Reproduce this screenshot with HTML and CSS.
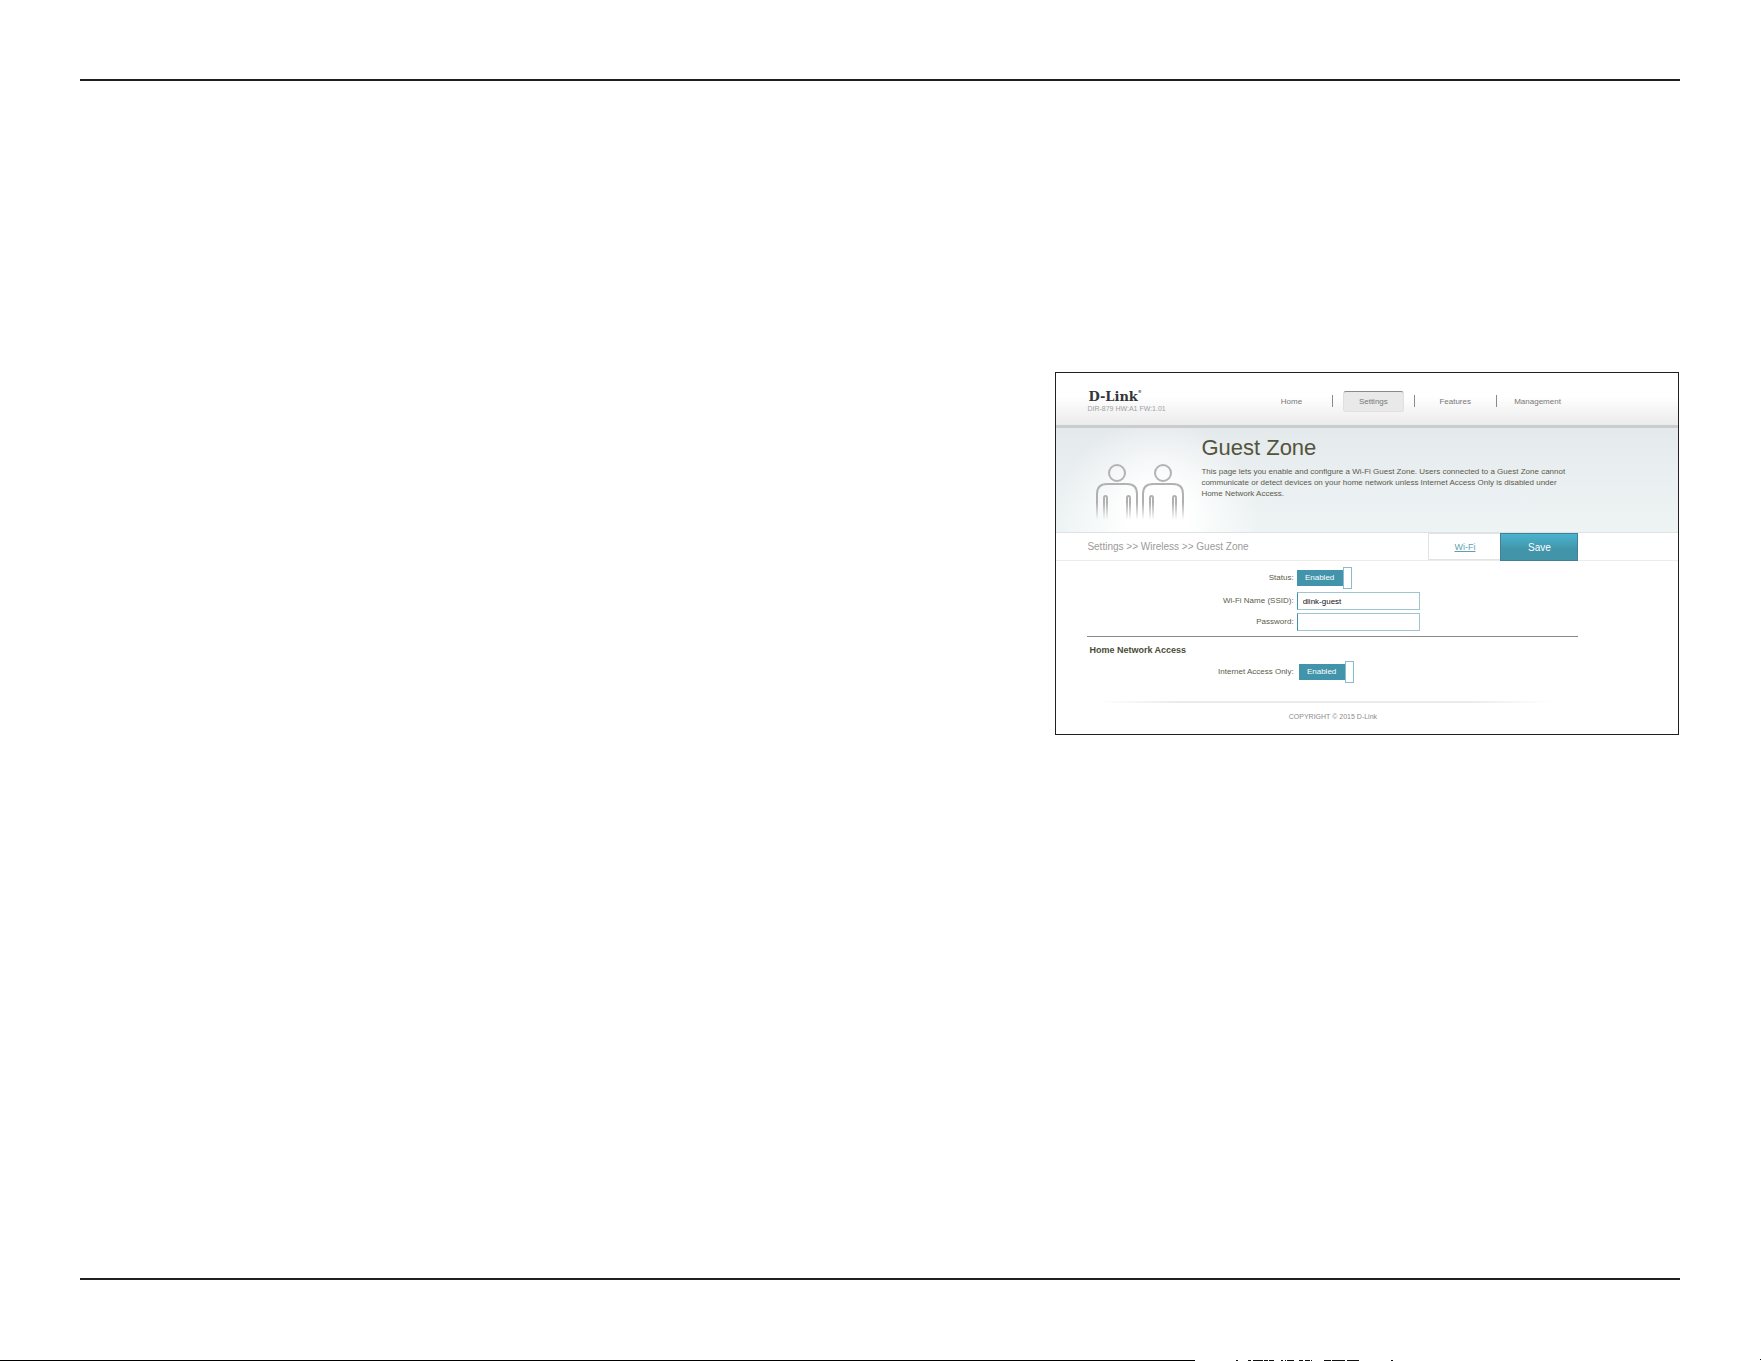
FILE: index.html
```html
<!DOCTYPE html>
<html lang="en">
<head>
    <meta charset="UTF-8">
    <meta name="viewport" content="width=device-width, initial-scale=1.0">
    <title>Guest Zone</title>
    <link rel="stylesheet" href="styles.css">
</head>
<body>

    <main class="sheet">
        <section class="panel">

            <header class="top">
                <div class="wrap top-row">
                    <div class="brand">
                        <div class="logo">D-Link<sup>®</sup></div>
                        <div class="model">DIR-879 HW:A1 FW:1.01</div>
                    </div>
                    <nav class="menu">
                        <a href="#">Home</a>
                        <a href="#" class="active"><span>Settings</span></a>
                        <a href="#">Features</a>
                        <a href="#">Management</a>
                    </nav>
                </div>
            </header>

            <div class="hero">
                <div class="wrap hero-row">
                    <svg class="people" viewBox="0 0 92 62" aria-hidden="true">
                        <defs>
                            <linearGradient id="fade" gradientUnits="userSpaceOnUse" x1="0" y1="0" x2="0" y2="58">
                                <stop offset="0" stop-color="#b4b4b4"/>
                                <stop offset="0.7" stop-color="#b0b0b0"/>
                                <stop offset="1" stop-color="#b0b0b0" stop-opacity="0"/>
                            </linearGradient>
                        </defs>
                        <g fill="none" stroke="url(#fade)" stroke-width="2">
                            <circle cx="22" cy="11" r="8"/>
                            <path d="M2 60V32Q2 22 12 22H32Q42 22 42 32V60"/>
                            <path d="M9 60V36Q9 34 10.500 34Q12 34 12 36V60M32 60V36Q32 34 33.500 34Q35 34 35 36V60"/>
                            <circle cx="68" cy="11" r="8"/>
                            <path d="M48 60V32Q48 22 58 22H78Q88 22 88 32V60"/>
                            <path d="M55 60V36Q55 34 56.500 34Q58 34 58 36V60M78 60V36Q78 34 79.500 34Q81 34 81 36V60"/>
                        </g>
                    </svg>
                    <div class="intro">
                        <h1>Guest Zone</h1>
                        <p>This page lets you enable and configure a Wi-Fi Guest Zone. Users connected to a Guest Zone cannot<br>
                        communicate or detect devices on your home network unless Internet Access Only is disabled under<br>
                        Home Network Access.</p>
                    </div>
                </div>
            </div>

            <div class="bar">
                <div class="wrap bar-row">
                    <div class="crumbs">Settings &gt;&gt; Wireless &gt;&gt; Guest Zone</div>
                    <a href="#" class="wifi">Wi-Fi</a>
                    <button type="button" class="save">Save</button>
                </div>
            </div>

            <form class="wrap">
                <div class="fields">
                    <label for="status">Status:</label>
                    <div class="toggle"><span>Enabled</span><input type="checkbox" id="status" checked></div>
                    <label for="ssid">Wi-Fi Name (SSID):</label>
                    <input type="text" id="ssid" class="text" value="dlink-guest">
                    <label for="password">Password:</label>
                    <input type="password" id="password" class="text">
                </div>
                <h2>Home Network Access</h2>
                <div class="fields access">
                    <label for="internet">Internet Access Only:</label>
                    <div class="toggle"><span>Enabled</span><input type="checkbox" id="internet" checked></div>
                </div>
            </form>

            <footer class="wrap copyright">COPYRIGHT © 2015 D-Link</footer>
        </section>
    </main>

    <!-- top edge of the next sheet -->
    <div class="next">
        <div class="next-line"></div>
        <svg width="566" height="2" viewBox="0 0 566 2" aria-hidden="true">
            <path d="M41 1.500h2M53 1.500h3M58 1.500h10M69 1.500h4M74 1.500h5M86 1.500h2M90 1.500h1M92 1.500h7M104 1.500h4M110 1.500h5M116 1.500h1M129 1.500h7M137 1.500h13M152 1.500h12M196 1.500h2M565 .5h1" stroke="#111"/>
        </svg>
    </div>

</body>
</html>
```
FILE: styles.css
```css
* {
    box-sizing: border-box;
}

body {
    font-family: "Liberation Sans", Arial, sans-serif;
    margin: 0;
    background-color: #fff;
    color: #5b5b4b;
    font-size: 8px;
    display: flex;
    flex-direction: column;
    min-height: 100vh;
}

a {
    color: inherit;
    text-decoration: none;
}

.sheet {
    flex: 1;
    display: grid;
    grid-template-columns: 39%;
    justify-content: end;
    align-items: start;
    margin: 79px 81px 79px 80px;
    padding: 291px 1px 0 0;
    border-top: 2px solid #231f20;
    border-bottom: 2px solid #231f20;
}

.panel {
    border: 1px solid #231f20;
}

.wrap {
    width: 79%;
    margin-left: 31px;
}

/* Header */

.top {
    background: linear-gradient(#fff 45%, #ebebeb);
    border-bottom: 3px solid #c9cecd;
}

.top-row {
    display: grid;
    grid-template-columns: 1fr 2fr;
    height: 52px;
    padding-top: 17px;
}

.logo {
    font-family: "DejaVu Serif", serif;
    font-weight: bold;
    font-size: 13px;
    line-height: 13px;
    color: #333537;
    padding-left: 1px;
}

.logo sup {
    font-size: 4px;
    line-height: 4px;
    vertical-align: top;
}

.model {
    font-size: 7px;
    line-height: 12px;
    color: #a0a0a0;
}

.menu {
    display: grid;
    grid-template-columns: repeat(4, 1fr);
    height: 20px;
}

.menu a {
    display: flex;
    align-items: center;
    justify-content: center;
    height: 12px;
    margin-top: 5px;
    border-right: 1px solid #8a8a8a;
    color: #777;
}

.menu a:last-child {
    border-right: none;
}

.menu .active span {
    padding: 4px 15px;
    line-height: 11px;
    background-color: #e9e9e9;
    border: 1px solid #e0e0e0;
    border-top-color: #8a8a8a;
    border-radius: 3px;
}

/* Title area */

.hero {
    background:
        radial-gradient(ellipse 100px 100px at 102px 90px, #fff 30%, rgba(255, 255, 255, 0)),
        linear-gradient(#e4e9ec, #eaeff1 50%, #eef4f4);
    border-bottom: 1px solid #dde2e2;
}

.hero-row {
    display: grid;
    grid-template-columns: 92px 1fr;
    gap: 14px;
    padding-left: 8px;
    height: 104px;
}

.people {
    width: 92px;
    height: 62px;
    margin-top: 34px;
}

.intro {
    white-space: nowrap;
}

h1 {
    margin: 8px 0 6px;
    font-size: 22px;
    line-height: 24px;
    font-weight: normal;
    color: #54543c;
}

p {
    margin: 0;
    line-height: 11px;
}

/* Breadcrumb bar */

.bar {
    border-bottom: 1px solid #ececec;
}

.bar-row {
    display: flex;
    height: 27px;
}

.crumbs {
    flex: 1;
    font-size: 10px;
    line-height: 27px;
    color: #9b9b9b;
}

.wifi {
    width: 72px;
    border: 1px solid #e2e4e4;
    border-right: none;
    font-size: 9px;
    line-height: 26px;
    text-align: center;
    text-decoration: underline;
    color: #5f9fb4;
}

.save {
    width: 78px;
    height: 28px;
    padding: 0;
    border: 1px solid #448095;
    background: linear-gradient(#4bb4cf, #4294a9 60%);
    color: #fff;
    font-family: inherit;
    font-size: 10px;
}

/* Form */

.fields {
    display: grid;
    grid-template-columns: 42% auto;
    justify-content: start;
    align-items: center;
    gap: 3px;
    padding: 6px 0 5px;
    border-bottom: 1px solid #8a8a8a;
}

.fields label {
    text-align: right;
    line-height: 10px;
}

.text {
    width: 123px;
    height: 18px;
    padding: 0 5px;
    border: 1px solid #9dc6d1;
    border-left-color: #4294a9;
    font-family: inherit;
    font-size: 8px;
    color: #111;
    outline: none;
}

.toggle {
    display: flex;
    align-items: center;
}

.toggle span {
    width: 46px;
    height: 16px;
    line-height: 16px;
    text-align: center;
    background-color: #4294ab;
    color: #fff;
}

.toggle input {
    appearance: none;
    width: 9px;
    height: 22px;
    margin: 0;
    border: 1px solid #8abccb;
    background-color: #fff;
}

h2 {
    margin: 8px 2px 0;
    font-size: 9px;
    line-height: 11px;
    color: #4b4b3a;
}

.access {
    gap: 5px;
    padding: 5px 0 18px;
    border-bottom: none;
}

.copyright {
    height: 33px;
    padding-top: 12px;
    font-size: 7px;
    line-height: 8px;
    text-align: center;
    color: #8b8b8b;
    background: linear-gradient(to right, transparent 2%, #ebebeb 18%, #ebebeb 78%, transparent 95%) top / 100% 2px no-repeat;
}

/* Bottom strip */

.next {
    display: flex;
    align-items: flex-end;
    height: 2px;
}

.next-line {
    flex: 1;
    height: 1px;
    background-color: #000;
}
```
